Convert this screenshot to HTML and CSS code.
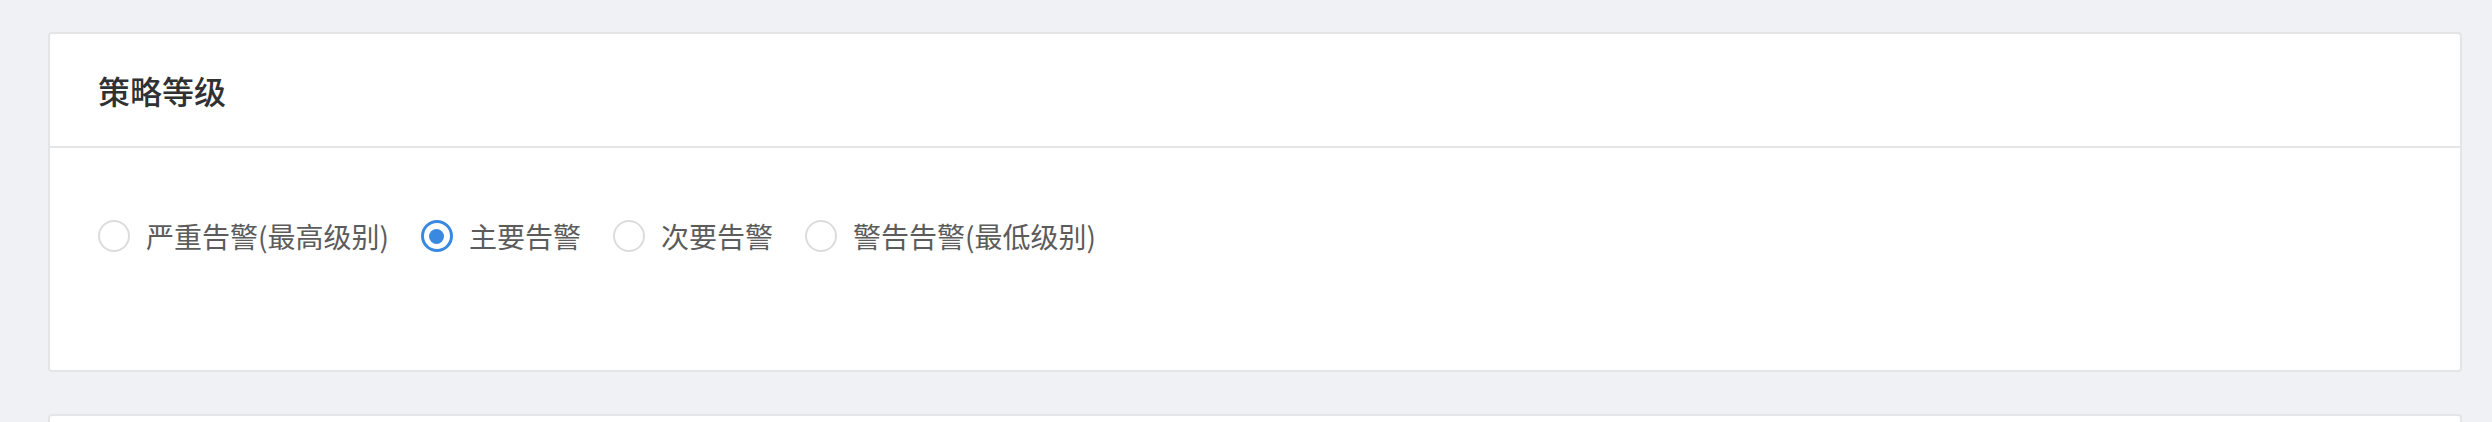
FILE: index.html
```html
<!DOCTYPE html>
<html lang="zh-CN">
<head>
<meta charset="utf-8">
<title>策略等级</title>
<link rel="stylesheet" href="styles.css">
</head>
<body>
<div class="page">
  <section class="card">
    <header class="card-header">
      <h2 class="card-title">策略等级</h2>
    </header>
    <div class="card-body">
      <div class="radio-group">
        <label class="radio">
          <span class="radio-dot"></span>
          <span class="radio-text">严重告警(最高级别)</span>
        </label>
        <label class="radio is-checked">
          <span class="radio-dot"></span>
          <span class="radio-text">主要告警</span>
        </label>
        <label class="radio">
          <span class="radio-dot"></span>
          <span class="radio-text">次要告警</span>
        </label>
        <label class="radio">
          <span class="radio-dot"></span>
          <span class="radio-text">警告告警(最低级别)</span>
        </label>
      </div>
    </div>
  </section>
  <section class="card card-next"></section>
</div>
</body>
</html>
```
FILE: styles.css
```css
* { box-sizing: border-box; }
html, body {
  margin: 0;
  padding: 0;
  background: #f0f1f5;
  font-family: "Noto Sans CJK SC", "Noto Sans", sans-serif;
}
.page {
  padding: 32px 30px 0 48px;
}
.card {
  background: #ffffff;
  border: 2px solid #e4e5e7;
  border-radius: 4px;
}
.card-header {
  height: 114px;
  display: flex;
  align-items: center;
  padding: 0 48px;
  border-bottom: 2px solid #e4e5e7;
}
.card-title {
  margin: 0;
  font-size: 32px;
  font-weight: 500;
  color: #303133;
  line-height: 1;
}
.card-body {
  padding: 68px 48px 114px;
}
.radio-group {
  display: flex;
  align-items: center;
  height: 40px;
}
.radio {
  display: inline-flex;
  align-items: center;
  gap: 16px;
  margin-right: 32px;
  cursor: pointer;
}
.radio-dot {
  width: 32px;
  height: 32px;
  border-radius: 50%;
  border: 2px solid #dcdcdc;
  background: #fff;
  display: flex;
  align-items: center;
  justify-content: center;
}
.radio.is-checked .radio-dot {
  border: 3px solid #3a89e0;
}
.radio.is-checked .radio-dot::after {
  content: "";
  width: 15px;
  height: 15px;
  border-radius: 50%;
  background: #3a89e0;
}
.radio-text {
  font-size: 28px;
  color: #5c5c5c;
  line-height: 40px;
}
.card-next {
  margin-top: 42px;
  height: 60px;
}
```
